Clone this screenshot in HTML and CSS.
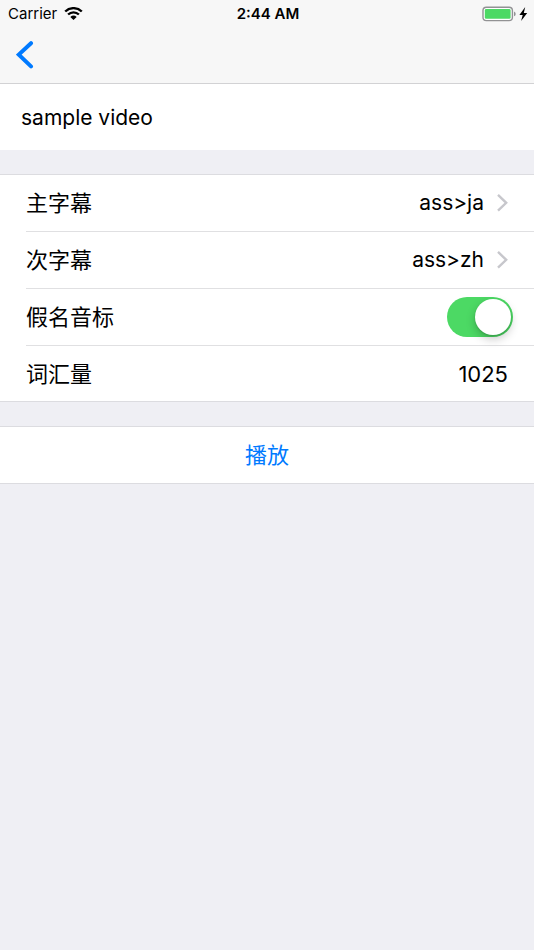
FILE: index.html
```html
<!DOCTYPE html>
<html lang="zh-CN">
<head>
<meta charset="utf-8">
<meta name="viewport" content="width=device-width, initial-scale=1">
<title>sample video</title>
<link rel="stylesheet" href="styles.css">
</head>
<body>
<header class="header">
  <div class="status">
    <div class="status-side">
      <span>Carrier</span>
      <svg class="wifi" width="19" height="13" viewBox="0 0 19 13" aria-hidden="true">
        <path d="M1.2 4.5a12 12 0 0 1 16.6 0M4.1 7.5a7.8 7.8 0 0 1 10.8 0" fill="none" stroke="#000" stroke-width="2.4"/>
        <path d="M9.5 13 6.3 9.9a4.7 4.7 0 0 1 6.4 0z"/>
      </svg>
    </div>
    <time class="clock">2:44 AM</time>
    <div class="status-side status-end">
      <svg width="46" height="16" viewBox="0 0 46 16" aria-hidden="true">
        <rect x="1" y="1.2" width="29.4" height="13.4" rx="3.4" fill="#fff" stroke="#929294" stroke-width="1.4"/>
        <rect x="2.8" y="3" width="25.8" height="9.8" rx="1.4" fill="#4cd964"/>
        <path d="M32 5.6q1.7.6 1.7 2.3T32 10.2z" fill="#929294"/>
        <path d="M43.2 1 37.4 9h3.3l-1.6 5.9L45.2 7h-3.4z"/>
      </svg>
    </div>
  </div>
  <nav class="nav">
    <a class="back" href="#" aria-label="返回">
      <svg width="18" height="28" viewBox="0 0 18 28" aria-hidden="true">
        <path d="M15 2.2 2.8 13.6 15 25.4" fill="none" stroke="#007aff" stroke-width="4" stroke-linecap="round"/>
      </svg>
    </a>
  </nav>
</header>
<main>
  <h1 class="title">sample video</h1>
  <section class="group">
    <a class="row" href="#">
      <span>主字幕</span>
      <span class="value">ass&gt;ja</span>
      <svg class="chevron" width="12" height="18" viewBox="0 0 12 18" aria-hidden="true"><path d="M2 .9 10.2 8.8 2 16.7"/></svg>
    </a>
    <a class="row" href="#">
      <span>次字幕</span>
      <span class="value">ass&gt;zh</span>
      <svg class="chevron" width="12" height="18" viewBox="0 0 12 18" aria-hidden="true"><path d="M2 .9 10.2 8.8 2 16.7"/></svg>
    </a>
    <div class="row row-switch">
      <label for="kana">假名音标</label>
      <input class="switch" id="kana" type="checkbox" role="switch" checked>
    </div>
    <div class="row">
      <label for="vocabulary">词汇量</label>
      <input class="number" id="vocabulary" type="text" inputmode="numeric" value="1025">
    </div>
  </section>
  <button class="play" type="button">播放</button>
</main>
</body>
</html>
```

FILE: styles.css
```css
* {
  box-sizing: border-box;
}

body {
  margin: 0;
  background: #efeff4;
  color: #000;
  font: 22px/32px Inter, "Noto Sans CJK SC", sans-serif;
}

a {
  color: inherit;
  text-decoration: none;
}

svg {
  display: block;
  flex: none;
}

.header {
  background: #f7f7f7;
  border-bottom: 1px solid #d2d2d4;
}

.status {
  display: flex;
  align-items: center;
  height: 27px;
  padding: 0 6px 0 8px;
  font-size: 15px;
  line-height: 27px;
}

.status-side {
  display: flex;
  flex: 1;
  align-items: center;
  gap: 7px;
}

.status-end {
  justify-content: flex-end;
}

.clock {
  font-weight: 600;
}

.nav {
  display: flex;
  align-items: center;
  height: 56px;
  padding: 0 16px;
}

.title {
  margin: 0 0 24px;
  padding: 18px 21px 16px;
  background: #fff;
  font-size: 21px;
  font-weight: 400;
}

.group {
  margin-bottom: 24px;
  padding-left: 26px;
  background: #fff;
  border-top: 1px solid #dcdce0;
  border-bottom: 1px solid #dcdce0;
}

.row {
  display: flex;
  align-items: center;
  min-height: 57px;
  padding-right: 26px;
  border-bottom: 1px solid #e0e0e2;
}

.row:last-child {
  min-height: 55px;
  border-bottom: 0;
}

.row-switch {
  padding-right: 21px;
}

.value {
  margin-left: auto;
  font-size: 21px;
}

.chevron {
  margin-left: 12px;
  fill: none;
  stroke: #c7c7cc;
  stroke-width: 2.4;
}

.switch {
  appearance: none;
  width: 66px;
  height: 40px;
  margin: 0 0 0 auto;
  padding: 2px;
  border-radius: 20px;
  background: #e5e5ea;
}

.switch::before {
  display: block;
  width: 36px;
  height: 36px;
  border-radius: 50%;
  background: #fff;
  box-shadow: 0 4px 10px rgba(0, 0, 0, 0.22), 0 1px 2px rgba(0, 0, 0, 0.14);
  content: "";
}

.switch:checked {
  background: #4cd964;
}

.switch:checked::before {
  margin-left: auto;
}

.number {
  flex: 1;
  min-width: 0;
  padding: 0;
  border: 0;
  background: none;
  color: inherit;
  font: inherit;
  text-align: right;
}

.play {
  display: block;
  width: 100%;
  padding: 12px;
  border: solid #dcdce0;
  border-width: 1px 0;
  background: #fff;
  color: #007aff;
  font: inherit;
}
```
